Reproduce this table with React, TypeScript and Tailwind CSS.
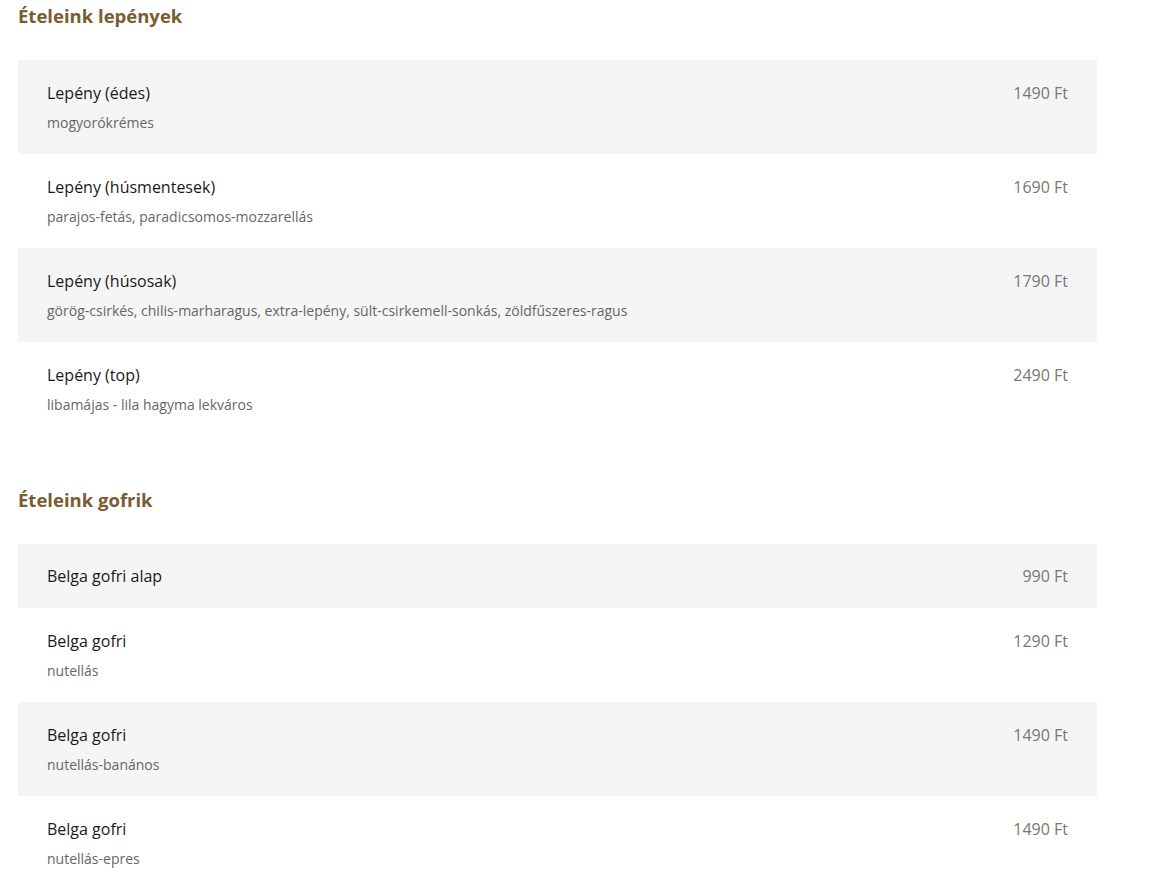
import React from 'react';

interface MenuItem {
  name: string;
  description?: string;
  price: string;
}

interface Section {
  title: string;
  items: MenuItem[];
}

const sections: Section[] = [
  {
    title: 'Ételeink lepények',
    items: [
      { name: 'Lepény (édes)', description: 'mogyorókrémes', price: '1490 Ft' },
      { name: 'Lepény (húsmentesek)', description: 'parajos-fetás, paradicsomos-mozzarellás', price: '1690 Ft' },
      {
        name: 'Lepény (húsosak)',
        description: 'görög-csirkés, chilis-marharagus, extra-lepény, sült-csirkemell-sonkás, zöldfűszeres-ragus',
        price: '1790 Ft'
      },
      { name: 'Lepény (top)', description: 'libamájas - lila hagyma lekváros', price: '2490 Ft' }
    ]
  },
  {
    title: 'Ételeink gofrik',
    items: [
      { name: 'Belga gofri alap', price: '990 Ft' },
      { name: 'Belga gofri', description: 'nutellás', price: '1290 Ft' },
      { name: 'Belga gofri', description: 'nutellás-banános', price: '1490 Ft' },
      { name: 'Belga gofri', description: 'nutellás-epres', price: '1490 Ft' }
    ]
  }
];

export default function App() {
  return (
    <div className="min-h-screen bg-white px-[18px] pt-[4px] font-['Open_Sans',sans-serif]">
      <div className="w-[1079px]">
        {sections.map((section, si) => (
          <div key={si} className={si > 0 ? 'mt-[52px]' : ''}>
            <h2 className="text-[18.5px] leading-[24px] font-bold text-[#7a5c31] mb-[32px]">
              {section.title}
            </h2>
            <div>
              {section.items.map((item, i) => (
                <div
                  key={i}
                  className={`flex items-start justify-between px-[29px] ${item.description ? 'pt-[21px] pb-[21px]' : 'py-[20px]'} ${i % 2 === 0 ? 'bg-[#f5f5f5]' : 'bg-white'}`}
                >
                  <div>
                    <div className="text-[16px] leading-[24px] text-[#1a1a1a]">{item.name}</div>
                    {item.description && (
                      <div className="mt-[8px] text-[14px] leading-[20px] text-[#666]">{item.description}</div>
                    )}
                  </div>
                  <div className="text-[16px] leading-[24px] text-[#777]">{item.price}</div>
                </div>
              ))}
            </div>
          </div>
        ))}
      </div>
    </div>
  );
}
